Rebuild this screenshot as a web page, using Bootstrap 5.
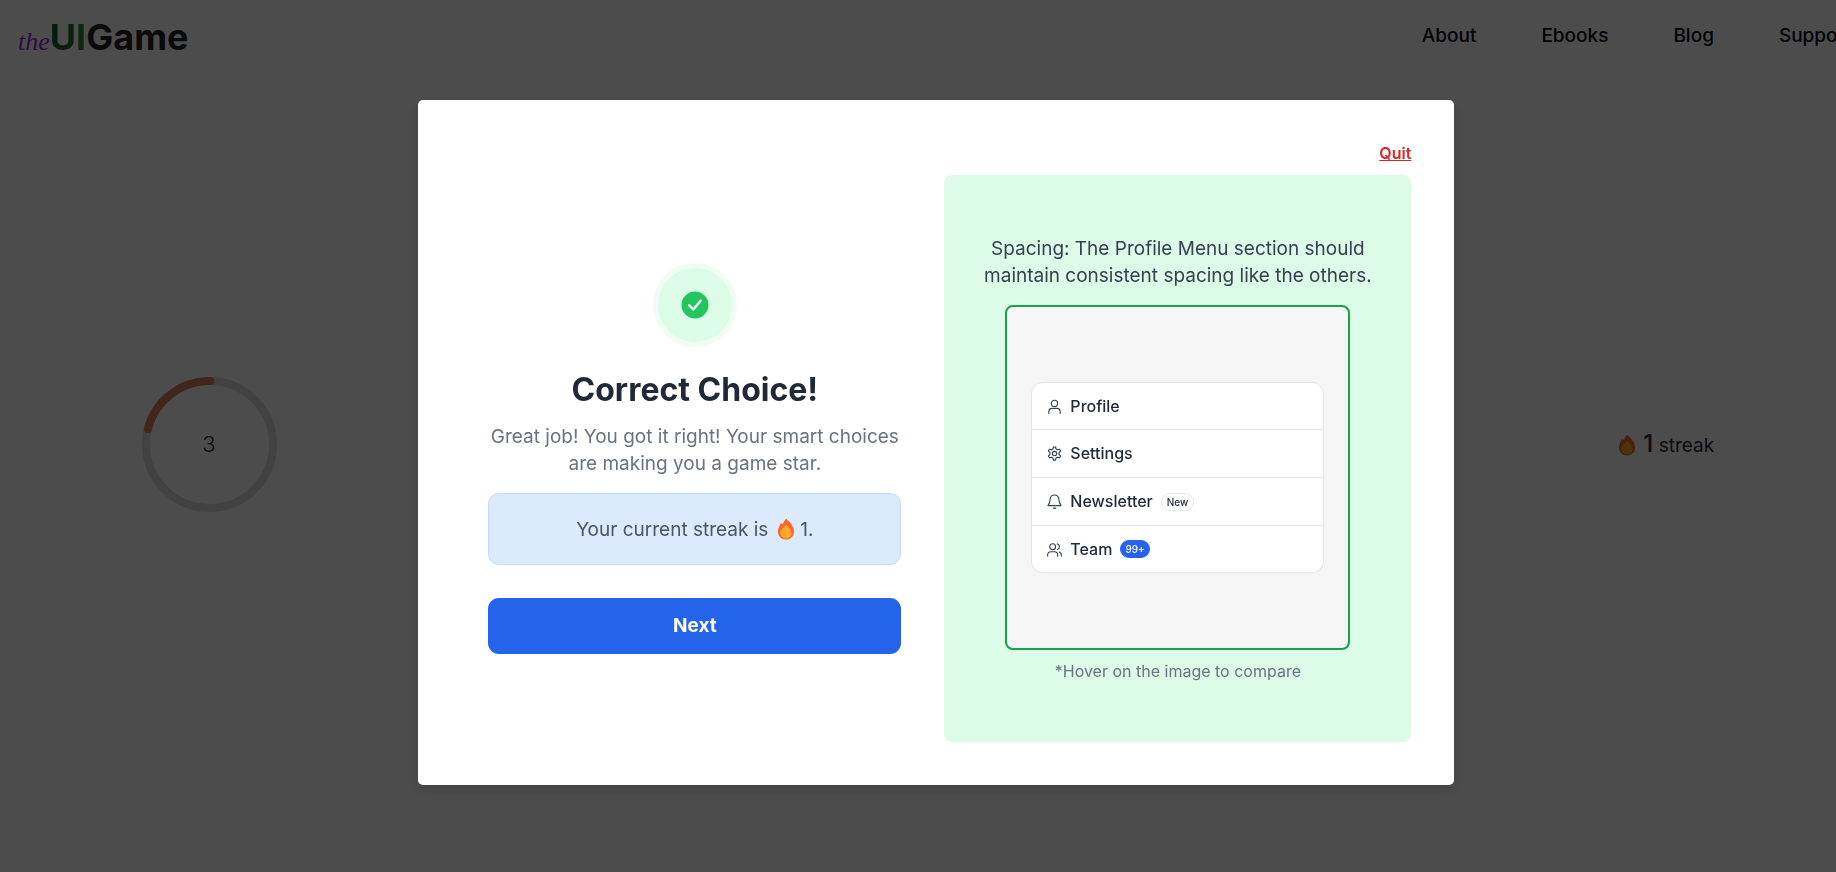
<!DOCTYPE html>
<html lang="en">
<head>
<meta charset="utf-8">
<meta name="viewport" content="width=device-width, initial-scale=1">
<title>theUIGame</title>
<link href="https://cdn.jsdelivr.net/npm/bootstrap@5.3.0/dist/css/bootstrap.min.css" rel="stylesheet">
<style>
  body { font-family: Inter, "Liberation Sans", sans-serif; font-size: 19px; line-height: 27px; color: #1f2937; overflow: hidden; }
  .page-wide { width: 102vw; min-height: 100vh; }
  .site-nav { height: 71px; padding: 0 21px 0 18px; }
  .site-nav .nav-link { color: #030712; font-weight: 500; padding: 0; }
  .site-links { gap: 65px; }
  .brand-logo { font-size: 36px; line-height: 44px; font-weight: 700; color: #222; text-decoration: none; padding-top: 8px; }
  .brand-the { font-family: "Liberation Serif", serif; font-style: italic; font-weight: 400; font-size: 26px; color: #9a30dc; }
  .brand-ui { background: linear-gradient(90deg, #14532d, #2f8a3c); -webkit-background-clip: text; background-clip: text; color: transparent; }
  .stage { padding-bottom: 54px; }
  .stage-side { width: 418px; }
  .timer { width: 135px; height: 135px; }
  .timer-value { font-size: 22px; font-weight: 300; }
  .streak-label { margin-left: 6px; }
  .streak-tally { padding-left: 4px; }
  .streak-count { font-size: 24px; font-weight: 500; }
  .result-backdrop { background: rgba(0, 0, 0, .7); width: 102vw; padding-top: 100px; overflow: hidden; }
  .result-dialog { max-width: 1036px; margin: 0 auto; }
  .result-content { border: 0; border-radius: 5px; padding: 43px; box-shadow: 0 4px 12px rgba(0, 0, 0, .15); }
  .quit-link { color: #dc2626; font-size: 16px; line-height: 20px; font-weight: 600; }
  .quit-link:hover { color: #b91c1c; }
  .result-body { gap: 43px; margin-top: 12px; }
  .result-left { padding-left: 27px; }
  .check-disc { width: 84px; height: 84px; border: 5px solid #f0fdf4; background: #dcfce7; margin-bottom: 24px; }
  .result-title { font-size: 32px; line-height: 38px; font-weight: 700; margin-bottom: 14px; }
  .result-text { color: #6b7280; margin-bottom: 16px; }
  .streak-note { height: 72px; border: 1px solid #bfdbfe; border-radius: 11px; background: #dbeafe; color: #4b5563; margin-bottom: 33px; }
  .next-btn { height: 56px; border: 0; border-radius: 11px; background: #2563eb; font-size: 19px; font-weight: 700; }
  .review-panel { flex: 0 0 467px; background: #dcfce7; border-radius: 8px; padding: 60px 32px 59px; }
  .review-text { color: #374151; margin-bottom: 16px; }
  .compare-frame { width: 345px; height: 345px; border: 2px solid #16a34a; border-radius: 8px; background: #f5f5f5; padding: 0 24px; }
  .menu-card { --bs-list-group-border-color: #e5e7eb; --bs-list-group-border-radius: 12px; }
  .menu-card .list-group-item { height: 48px; padding: 0 15px; gap: 8px; font-size: 16px; font-weight: 500; color: #1f2937; }
  .menu-card .list-group-item:last-child { height: 47px; }
  .menu-icon { width: 15px; height: 15px; fill: none; stroke: #374151; stroke-width: 1.8; stroke-linecap: round; stroke-linejoin: round; }
  .pill { font-size: 10px; line-height: 16px; font-weight: 500; border-radius: 9px; padding: 0 5px; border: 1px solid #e5e7eb; }
  .pill-blue { background: #2563eb; border-color: #2563eb; color: #fff; padding: 0 4px; }
  .caption-note { font-size: 16px; line-height: 24px; color: #6b7280; margin-top: 9px; }
  .flame { width: 20px; height: 22px; }
</style>
</head>
<body>
<svg class="d-none">
  <symbol id="flame" viewBox="0 0 20 22">
    <path fill="#ff6428" d="M10.2.5c1.300 2.300 7.800 6.300 7.800 12.900 0 4.700-3.400 8.100-8 8.100s-8-3.400-8-8c0-3 1.500-5.800 3-8.500l1.700 1.200C7.700 4.300 8.600 2.300 10.200.5z"/>
    <path fill="#ffaa2c" d="M10.300 6.500c2.500 2.800 5.200 4.800 5.200 8.600 0 3.200-2.300 5.400-5.500 5.400s-5.500-2.300-5.500-5.400c0-3.600 3.300-5.500 5.800-8.600z"/>
  </symbol>
</svg>

<div class="page-wide d-flex flex-column">
  <nav class="site-nav d-flex align-items-center justify-content-between">
    <a class="brand-logo" href="#"><span class="brand-the">the</span><span class="brand-ui">UI</span>Game</a>
    <div class="site-links nav flex-nowrap">
      <a class="nav-link" href="#">About</a>
      <a class="nav-link" href="#">Ebooks</a>
      <a class="nav-link" href="#">Blog</a>
      <a class="nav-link" href="#">Support</a>
    </div>
  </nav>
  <main class="stage flex-grow-1 d-flex justify-content-between align-items-center">
    <div class="stage-side d-flex justify-content-center">
      <div class="timer position-relative d-flex align-items-center justify-content-center">
        <svg class="position-absolute top-0 start-0 w-100 h-100" viewBox="0 0 135 135" fill="none" stroke-width="8">
          <circle cx="67.500" cy="67.500" r="63.500" stroke="#dcdcdc"/>
          <path d="M68.500 4A63.500 63.500 0 0 0 5.900 52" stroke="#e27f58" stroke-linecap="round"/>
        </svg>
        <span class="timer-value">3</span>
      </div>
    </div>
    <div class="stage-side streak-tally d-flex justify-content-center align-items-center">
      <svg class="flame"><use href="#flame"/></svg>
      <div class="streak-label"><span class="streak-count">1</span> streak</div>
    </div>
  </main>
</div>

<div class="modal result-backdrop d-block" role="dialog" aria-labelledby="resultTitle">
  <div class="result-dialog modal-dialog">
    <div class="result-content modal-content">
      <a class="quit-link align-self-end" href="#">Quit</a>
      <div class="result-body d-flex">
        <section class="result-left flex-grow-1 d-flex flex-column justify-content-center text-center">
          <div class="check-disc rounded-circle d-flex align-items-center justify-content-center align-self-center">
            <svg width="28" height="28" viewBox="0 0 28 28"><circle cx="14" cy="14" r="13.500" fill="#22c55e"/><path d="M8.300 14.300l4 4.200 7.300-8.800" fill="none" stroke="#f0fdf4" stroke-width="2.500" stroke-linecap="round" stroke-linejoin="round"/></svg>
          </div>
          <h2 class="result-title" id="resultTitle">Correct Choice!</h2>
          <p class="result-text">Great job! You got it right! Your smart choices<br>are making you a game star.</p>
          <div class="streak-note d-flex align-items-center justify-content-center">Your current streak is <svg class="flame ms-2 me-1"><use href="#flame"/></svg> 1.</div>
          <button class="next-btn btn btn-primary" type="button">Next</button>
        </section>
        <section class="review-panel d-flex flex-column align-items-center text-center">
          <p class="review-text">Spacing: The Profile Menu section should maintain consistent spacing like the others.</p>
          <div class="compare-frame d-flex align-items-center">
            <ul class="menu-card list-group w-100">
              <li class="list-group-item d-flex align-items-center"><svg class="menu-icon" viewBox="0 0 24 24"><circle cx="12" cy="7" r="5"/><path d="M3 23v-3a5 5 0 0 1 5-5h8a5 5 0 0 1 5 5v3"/></svg>Profile</li>
              <li class="list-group-item d-flex align-items-center"><svg class="menu-icon" viewBox="0 0 24 24"><circle cx="12" cy="12" r="3.500"/><path d="M10.300 1.500h3.400l.8 3.300 2.300 1.300 3.300-1 1.700 3-2.500 2.300v3.200l2.500 2.300-1.700 3-3.300-1-2.300 1.300-.8 3.300h-3.400l-.8-3.300-2.300-1.300-3.300 1-1.700-3 2.500-2.300v-3.200L2.200 8.100l1.700-3 3.300 1 2.300-1.300z"/></svg>Settings</li>
              <li class="list-group-item d-flex align-items-center"><svg class="menu-icon" viewBox="0 0 24 24"><path d="M12 1.500a7 7 0 0 0-7 7c0 5-1.500 7.500-3.500 10h21c-2-2.500-3.500-5-3.500-10a7 7 0 0 0-7-7zM10 22.500h4"/></svg>Newsletter<span class="pill">New</span></li>
              <li class="list-group-item d-flex align-items-center"><svg class="menu-icon" viewBox="0 0 24 24"><circle cx="9" cy="7.500" r="4.700"/><path d="M1 22.500v-2a5 5 0 0 1 5-5h6a5 5 0 0 1 5 5v2M16.500 3a4.700 4.700 0 0 1 0 9M20 16a5 5 0 0 1 3 4.500v2"/></svg>Team<span class="pill pill-blue">99+</span></li>
            </ul>
          </div>
          <div class="caption-note">*Hover on the image to compare</div>
        </section>
      </div>
    </div>
  </div>
</div>
<script src="https://cdn.jsdelivr.net/npm/bootstrap@5.3.0/dist/js/bootstrap.bundle.min.js"></script>
</body>
</html>
